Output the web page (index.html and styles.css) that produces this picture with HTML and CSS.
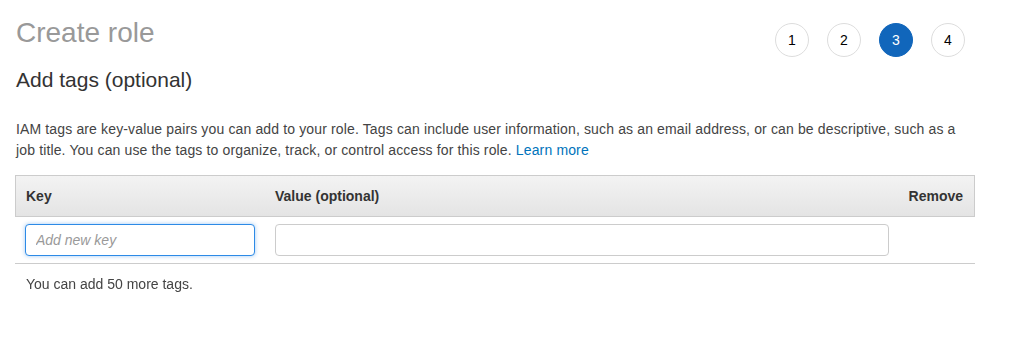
FILE: index.html
```html
<!DOCTYPE html>
<html lang="en">
<head>
  <meta charset="UTF-8">
  <meta name="viewport" content="width=device-width, initial-scale=1.0">
  <title>Create role</title>
  <link rel="stylesheet" href="styles.css">
</head>
<body>
  <div class="page">
    <div class="top">
      <h1>Create role</h1>
      <ol class="steps">
        <li class="step">1</li>
        <li class="step">2</li>
        <li class="step active">3</li>
        <li class="step">4</li>
      </ol>
    </div>
    <h2>Add tags (optional)</h2>
    <p class="intro">IAM tags are key-value pairs you can add to your role. Tags can include user information, such as an email address, or can be descriptive, such as a job title. You can use the tags to organize, track, or control access for this role. <a href="#">Learn more</a></p>

    <div class="tags">
      <div class="tags-head">
        <div class="col-key">Key</div>
        <div class="col-value">Value (optional)</div>
        <div class="col-remove">Remove</div>
      </div>
      <div class="tags-row">
        <div class="col-key"><input type="text" class="field focused" placeholder="Add new key" autofocus></div>
        <div class="col-value"><input type="text" class="field"></div>
        <div class="col-remove"></div>
      </div>
    </div>
    <p class="remaining">You can add 50 more tags.</p>
  </div>
</body>
</html>
```

FILE: styles.css
```css
body {
  margin: 0;
  font-family: "Liberation Sans", Arial, sans-serif;
  color: #444;
  background: #fff;
}
.page {
  width: 960px;
  padding: 17px 0 0 15px;
}
.top {
  display: flex;
  justify-content: space-between;
  align-items: flex-start;
}
h1 {
  margin: 0 0 0 1px;
  font-size: 28px;
  line-height: 32px;
  font-weight: normal;
  color: #999;
}
.steps {
  display: flex;
  gap: 18px;
  list-style: none;
  margin: 6px 10px 0 0;
  padding: 0;
}
.step {
  width: 32px;
  height: 32px;
  border: 1px solid #ddd;
  border-radius: 50%;
  display: flex;
  align-items: center;
  justify-content: center;
  font-size: 14px;
  color: #000;
}
.step.active {
  background-color: #1166bb;
  border-color: #1166bb;
  color: #fff;
}
h2 {
  margin: 11px 0 0 1px;
  font-size: 21px;
  line-height: 24px;
  font-weight: normal;
  color: #333;
}
.intro {
  max-width: 950px;
  margin: 27px 0 0 1px;
  font-size: 14px;
  line-height: 21px;
  letter-spacing: 0.14px;
}
.intro a {
  color: #0073bb;
  text-decoration: none;
}
.tags {
  margin-top: 14px;
}
.tags-head,
.tags-row {
  display: grid;
  grid-template-columns: 250px 1fr 75px;
}
.tags-head {
  height: 40px;
  align-items: center;
  background: linear-gradient(#f3f3f3, #e4e4e4);
  border: 1px solid #ccc;
  font-size: 14px;
  font-weight: bold;
  color: #333;
}
.tags-head .col-key {
  padding-left: 10px;
}
.tags-head .col-value {
  padding-left: 9px;
}
.tags-head .col-remove {
  text-align: right;
  padding-right: 11px;
}
.tags-row {
  padding: 7px 0 7px;
  border-bottom: 1px solid #ccc;
}
.tags-row .col-key {
  padding: 0 10px 0 10px;
}
.tags-row .col-value {
  padding: 0 11px 0 10px;
}
.field {
  box-sizing: border-box;
  width: 100%;
  height: 32px;
  margin: 0;
  padding: 0 10px;
  border: 1px solid #ccc;
  border-radius: 4px;
  font-family: "Liberation Sans", Arial, sans-serif;
  font-size: 14px;
  color: #444;
  outline: none;
}
.field::placeholder {
  color: #999;
  font-style: italic;
}
.field.focused {
  border-color: #2d8ae6;
  box-shadow: 0 0 4px rgba(45, 138, 230, 0.45);
}
.remaining {
  margin: 10px 0 0 11px;
  font-size: 14px;
  line-height: 21px;
}
```
